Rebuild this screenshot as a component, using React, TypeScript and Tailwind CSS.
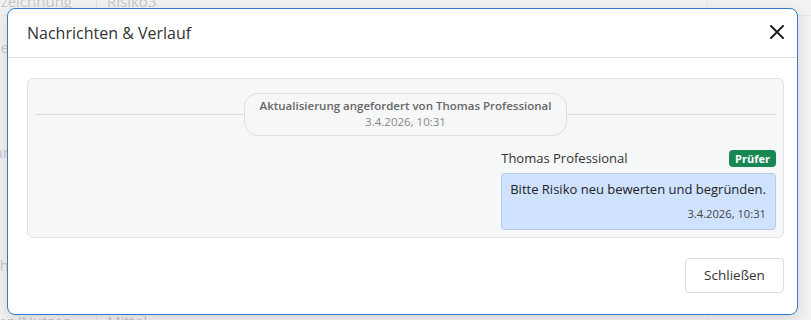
import React from 'react';

const font = { fontFamily: '"Open Sans", "Noto Sans", sans-serif' };

const CloseIcon = () => (
  <svg width="14" height="14" viewBox="0 0 14 14" fill="none">
    <path d="M1 1L13 13M13 1L1 13" stroke="#222" strokeWidth="2" strokeLinecap="round" />
  </svg>
);

// faded table rows behind the dialog
const BgRow: React.FC<{ a: string; b?: string; h: string }> = ({ a, b, h }) => (
  <div className={`flex items-center ${h} border-b border-[#e8e8e8]`}>
    <div className="w-[97px] flex justify-end overflow-hidden whitespace-nowrap pr-[24px] border-r border-[#e4e4e4] h-full items-center">
      {a}
    </div>
    <div className="pl-[10px] w-[611px] h-full flex items-center border-r border-[#e8e8e8]">{b}</div>
  </div>
);

const SideLabel: React.FC<{ t: string }> = ({ t }) => (
  <div className="h-[22px] flex items-center">
    <div className="w-[9px] flex justify-end overflow-hidden whitespace-nowrap">{t}</div>
  </div>
);

const App: React.FC = () => {
  return (
    <div className="relative w-[811px] h-[320px] overflow-hidden bg-[#f2f2f2]" style={font}>
      <div className="flex flex-col h-[348px] text-[15px] text-[#c8c8c8] -mt-[12px]">
        <BgRow a="Bezeichnung" b="Risiko3" h="h-[28px]" />
        <div className="flex-1 flex flex-col">
          <div className="h-[20px]" />
          <SideLabel t="Ursache" />
          <div className="h-[83px]" />
          <SideLabel t="Kommentar" />
          <div className="h-[91px]" />
          <SideLabel t="Bereich" />
        </div>
        <BgRow a="Maßnahmen/Nutzen" b="Mittel" h="h-[28px]" />
      </div>

      {/* dialog */}
      <div className="absolute left-[7px] top-[8px] w-[791px] h-[307px] bg-white border border-[#2f7dc7] rounded-[8px] shadow-[0_4px_14px_rgba(0,0,0,0.12)] flex flex-col">
        <div className="flex items-center justify-between h-[49px] pl-[19px] pr-[13px] border-b border-[#dee2e6]">
          <h5 className="text-[16px] text-[#333]">Nachrichten &amp; Verlauf</h5>
          <button className="-mt-[2px]">
            <CloseIcon />
          </button>
        </div>

        <div className="pl-[19px] pr-[13px] pt-[20px]">
          <div className="bg-[#f6f7f9] border border-[#dee2e6] rounded-[6px] px-[7px] pt-[14px] pb-[7px] flex flex-col">
            <div className="flex items-center">
              <div className="flex-1 border-t border-[#d9dce0]" />
              <div className="flex flex-col items-center border border-[#dcdfe3] rounded-[14px] px-[15px] pt-[4px] pb-[5px] leading-[16px]">
                <span className="text-[11.5px] font-semibold text-[#666]">Aktualisierung angefordert von Thomas Professional</span>
                <span className="text-[11.5px] text-[#888]">3.4.2026, 10:31</span>
              </div>
              <div className="flex-1 border-t border-[#d9dce0]" />
            </div>

            <div className="self-end mt-[14px]">
              <div className="flex items-center justify-between mb-[6px] h-[17px]">
                <span className="text-[13px] text-[#333]">Thomas Professional</span>
                <span className="bg-[#198754] text-white text-[11px] font-bold rounded-[4px] px-[6px] h-[17px] leading-[17px]">Prüfer</span>
              </div>
              <div className="bg-[#cfe2ff] border border-[#b9c9e0] rounded-[4px] pl-[8px] pr-[9px] pt-[5px] pb-[7px] text-right">
                <div className="text-[13px] text-[#222] leading-[20px] whitespace-nowrap">Bitte Risiko neu bewerten und begründen.</div>
                <div className="text-[11.2px] text-[#444] mt-[7px] leading-[16px]">3.4.2026, 10:31</div>
              </div>
            </div>
          </div>
        </div>

        <div className="flex justify-end px-[13px] pt-[20px]">
          <button className="h-[35px] w-[99px] bg-white border border-[#dcdcdc] rounded-[4px] text-[13.5px] text-[#333]">
            Schließen
          </button>
        </div>
      </div>
    </div>
  );
};

export default App;
